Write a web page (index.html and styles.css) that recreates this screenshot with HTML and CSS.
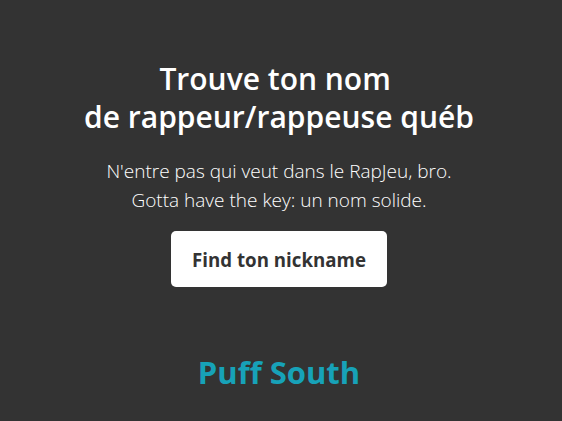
FILE: index.html
```html
<!DOCTYPE html>
<html lang="fr">
<head>
<meta charset="utf-8">
<link rel="stylesheet" href="styles.css">
</head>
<body>
<main class="page">
  <h1 class="title">Trouve ton nom&nbsp;<br>de rappeur/rappeuse québ</h1>
  <p class="lead">N'entre pas qui veut dans le RapJeu, bro.<br>Gotta have the key: un nom solide.</p>
  <button class="btn">Find ton nickname</button>
  <div class="brand">Puff South</div>
</main>
</body>
</html>
```
FILE: styles.css
```css
html, body {
  margin: 0;
  padding: 0;
  background: #333333;
  height: 100%;
}
.page {
  display: flex;
  flex-direction: column;
  align-items: center;
  text-align: center;
  font-family: "Open Sans", "Noto Sans", sans-serif;
  color: #ffffff;
  padding-top: 60px;
  padding-right: 4px;
}
.title {
  margin: 0;
  font-size: 30px;
  font-weight: 600;
  line-height: 38px;
}
.lead {
  margin: 21px 0 0;
  font-size: 19px;
  font-weight: 300;
  line-height: 29px;
}
.btn {
  margin-top: 16px;
  width: 216px;
  height: 56px;
  border: none;
  border-radius: 5px;
  background: #ffffff;
  color: #333333;
  font-family: inherit;
  font-size: 18.7px;
  font-weight: 700;
}
.brand {
  margin-top: 64px;
  font-size: 31px;
  font-weight: 700;
  color: #17a2b8;
}
```
